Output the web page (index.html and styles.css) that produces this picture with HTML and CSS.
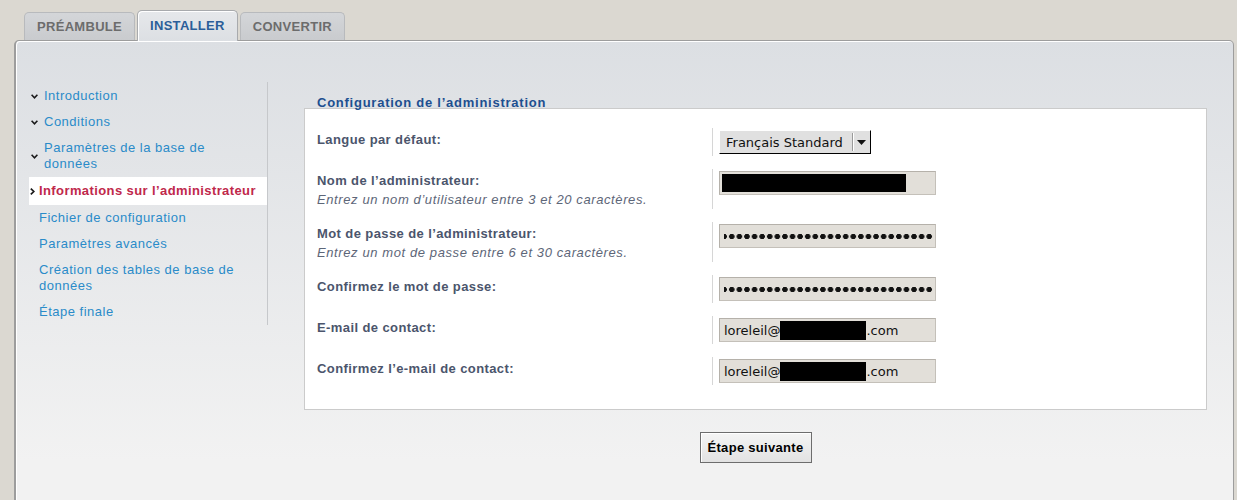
FILE: index.html
```html
<!DOCTYPE html>
<html>
<head>
    <title>Installation</title>
    <link rel="stylesheet" href="styles.css">
</head>
<body>
    <div class="tabs">
        <a class="tab">PRÉAMBULE</a>
        <a class="tab tab-active">INSTALLER</a>
        <a class="tab">CONVERTIR</a>
    </div>

    <div class="panel">
        <ul class="steps">
            <li class="step done"><span class="mark"><svg width="7" height="5" viewBox="0 0 7 5"><path d="M0.6 0.8 L3.5 3.8 L6.4 0.8" fill="none" stroke="#1a1a1a" stroke-width="1.6"/></svg></span><a>Introduction</a></li>
            <li class="step done"><span class="mark"><svg width="7" height="5" viewBox="0 0 7 5"><path d="M0.6 0.8 L3.5 3.8 L6.4 0.8" fill="none" stroke="#1a1a1a" stroke-width="1.6"/></svg></span><a>Conditions</a></li>
            <li class="step done"><span class="mark"><svg width="7" height="5" viewBox="0 0 7 5"><path d="M0.6 0.8 L3.5 3.8 L6.4 0.8" fill="none" stroke="#1a1a1a" stroke-width="1.6"/></svg></span><a>Paramètres de la base de données</a></li>
            <li class="step current"><span class="mark"><svg width="5" height="7" viewBox="0 0 5 7"><path d="M0.8 0.6 L3.8 3.5 L0.8 6.4" fill="none" stroke="#1a1a1a" stroke-width="1.7"/></svg></span><a>Informations sur l’administrateur</a></li>
            <li class="step"><a>Fichier de configuration</a></li>
            <li class="step"><a>Paramètres avancés</a></li>
            <li class="step"><a>Création des tables de base de données</a></li>
            <li class="step"><a>Étape finale</a></li>
        </ul>

        <div class="content">
            <h2 class="legend">Configuration de l’administration</h2>
            <div class="form-box">
                <div class="row">
                    <div class="label">Langue par défaut:</div>
                    <div class="value">
                        <div class="select">
                            <span class="select-text">Français Standard</span>
                            <span class="select-arrow"><svg width="9" height="5" viewBox="0 0 9 5"><path d="M0 0 H9 L4.5 5 Z" fill="#111"/></svg></span>
                        </div>
                    </div>
                </div>
                <div class="row">
                    <div class="label">Nom de l’administrateur:<div class="hint">Entrez un nom d’utilisateur entre 3 et 20 caractères.</div></div>
                    <div class="value"><div class="field"><span class="redact redact-name"></span></div></div>
                </div>
                <div class="row">
                    <div class="label">Mot de passe de l’administrateur:<div class="hint">Entrez un mot de passe entre 6 et 30 caractères.</div></div>
                    <div class="value"><div class="field"><span class="dots"></span></div></div>
                </div>
                <div class="row">
                    <div class="label">Confirmez le mot de passe:</div>
                    <div class="value"><div class="field"><span class="dots"></span></div></div>
                </div>
                <div class="row">
                    <div class="label">E-mail de contact:</div>
                    <div class="value"><div class="field">loreleil@<span class="redact redact-mail"></span>.com</div></div>
                </div>
                <div class="row">
                    <div class="label">Confirmez l’e-mail de contact:</div>
                    <div class="value"><div class="field">loreleil@<span class="redact redact-mail"></span>.com</div></div>
                </div>
            </div>
            <div class="actions">
                <button class="next">Étape suivante</button>
            </div>
        </div>
    </div>
</body>
</html>
```

FILE: styles.css
```css
body {
    margin: 0;
    height: 500px;
    overflow: hidden;
    background-color: #dbd8d1;
    font-family: "Liberation Sans", Arial, sans-serif;
}
.tabs {
    display: flex;
    align-items: flex-end;
    gap: 2px;
    height: 29px;
    padding: 11px 0 0 24px;
}
.tab {
    height: 27px;
    line-height: 27px;
    padding: 0 12px;
    border: 1px solid #b8babd;
    border-bottom: none;
    border-radius: 5px 5px 0 0;
    background: linear-gradient(#d4d6d9, #c9cbce);
    color: #6c6c6c;
    font-size: 13px;
    font-weight: bold;
    letter-spacing: 0.3px;
}
.tab-active {
    position: relative;
    z-index: 1;
    height: 30px;
    line-height: 29px;
    margin-bottom: -1px;
    border-color: #a8aaad;
    background: linear-gradient(#e6e8eb, #dcdfe3);
    box-shadow: inset 1px 1px 0 #fff;
    color: #2b5e99;
}
.panel {
    display: flex;
    height: 470px;
    margin: 0 3px 0 14px;
    padding: 42px 26px 0 13px;
    border: 1px solid #9d9d9d;
    border-left-width: 2px;
    border-radius: 5px 5px 0 0;
    box-shadow: inset 1px 1px 0 #fff;
    background: linear-gradient(#dcdfe3, #f2f2f2 420px);
}
.steps {
    width: 238px;
    align-self: flex-start;
    margin: -1px 0 0;
    padding: 0;
    list-style: none;
    border-right: 1px solid #c6c8cb;
}
.step {
    display: flex;
    align-items: center;
    padding: 5px 8px 5px 10px;
    font-size: 13px;
    line-height: 16px;
    letter-spacing: 0.5px;
    color: #2a8bc9;
}
.step:first-child {
    padding-top: 6px;
}
.step .mark {
    display: flex;
    align-items: center;
    flex: none;
}
.step.done {
    padding-left: 0;
}
.step.done .mark {
    width: 13px;
    padding-left: 2px;
}
.step.current {
    padding: 6px 0 6px 1px;
    background-color: #fff;
    color: #c0284b;
    font-weight: bold;
    letter-spacing: 0.4px;
}
.step.current .mark {
    width: 9px;
}
.content {
    flex: 1;
    margin-left: 36px;
}
.legend {
    position: relative;
    margin: 12px 0 -3px;
    padding-left: 13px;
    font-size: 13px;
    line-height: 16px;
    letter-spacing: 0.75px;
    color: #1d4f90;
}
.form-box {
    padding: 19px 0 24px 12px;
    background-color: #fff;
    border: 1px solid #cbcbcb;
}
.row {
    display: flex;
    margin-bottom: 13px;
}
.row:last-child {
    margin-bottom: 0;
}
.label {
    width: 395px;
    padding-top: 3px;
    font-size: 13px;
    font-weight: bold;
    line-height: 18px;
    letter-spacing: 0.4px;
    color: #4b556c;
}
.hint {
    font-weight: normal;
    font-style: italic;
    line-height: 19px;
    letter-spacing: 0.6px;
    color: #5d6678;
}
.value {
    padding: 2px 0 2px 6px;
    border-left: 1px solid #d6d6d6;
}
.field {
    display: flex;
    align-items: center;
    box-sizing: border-box;
    width: 217px;
    height: 24px;
    padding: 0 4px;
    border: 1px solid #c4c0b9;
    border-top-color: #b5b1aa;
    border-left-color: #b5b1aa;
    background-color: #e2dfd9;
    font-family: "DejaVu Sans", sans-serif;
    font-size: 13px;
    color: #111;
    overflow: hidden;
}
.redact {
    display: block;
    background-color: #000;
}
.redact-name {
    width: 184px;
    height: 18px;
    margin: 0 0 0 -2px;
}
.redact-mail {
    width: 86px;
    height: 19px;
}
.dots {
    display: block;
    flex: 1;
    height: 7px;
    margin-right: -2px;
    background: radial-gradient(circle, #111 2.4px, transparent 3px) right center / 7.6px 7px repeat-x;
}
.select {
    display: flex;
    align-items: center;
    box-sizing: border-box;
    width: 152px;
    height: 24px;
    border: 1px solid;
    border-color: #fff #000 #000 #fff;
    background-color: #e0e0e0;
    font-family: "DejaVu Sans", sans-serif;
    font-size: 13px;
    color: #111;
}
.select-text {
    flex: 1;
    padding-left: 6px;
}
.select-arrow {
    display: flex;
    align-items: center;
    justify-content: center;
    width: 17px;
    height: 18px;
    border-left: 1px solid #9a9a9a;
    box-shadow: inset 1px 0 0 #fff;
}
.actions {
    padding-top: 22px;
    text-align: center;
}
.next {
    width: 112px;
    height: 31px;
    border: 1px solid #6d6d6d;
    background: linear-gradient(#f5f5f5, #e2e2e2);
    box-shadow: inset 1px 1px 0 #fff;
    font-family: "Liberation Sans", Arial, sans-serif;
    font-size: 13px;
    font-weight: bold;
    letter-spacing: 0.3px;
    color: #000;
    cursor: pointer;
}
```
